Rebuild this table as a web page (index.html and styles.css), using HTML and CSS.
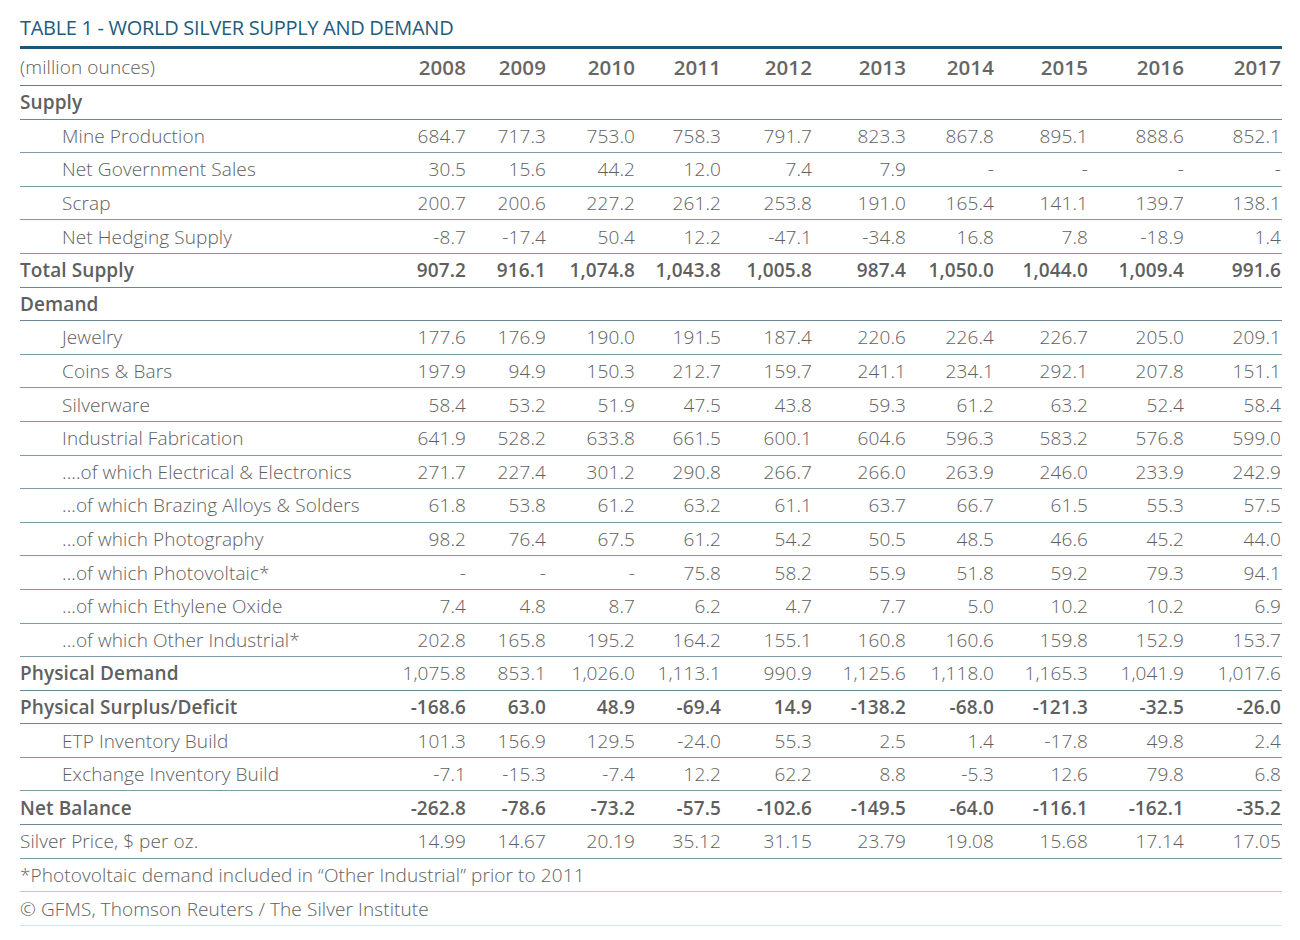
FILE: index.html
```html
<!DOCTYPE html>
<html>
<head>
<meta charset="utf-8">
<link rel="stylesheet" href="styles.css">
</head>
<body>
<div class="wrap">
  <h1 class="title">TABLE 1 - WORLD SILVER SUPPLY AND DEMAND</h1>
  <div class="table">
    <div class="row head"><div class="lbl reg">(million ounces)</div><div>2008</div><div>2009</div><div>2010</div><div>2011</div><div>2012</div><div>2013</div><div>2014</div><div>2015</div><div>2016</div><div>2017</div></div>
    <div class="row sect"><div class="lbl">Supply</div></div>
    <div class="row sub"><div class="lbl">Mine Production</div><div>684.7</div><div>717.3</div><div>753.0</div><div>758.3</div><div>791.7</div><div>823.3</div><div>867.8</div><div>895.1</div><div>888.6</div><div>852.1</div></div>
    <div class="row sub"><div class="lbl">Net Government Sales</div><div>30.5</div><div>15.6</div><div>44.2</div><div>12.0</div><div>7.4</div><div>7.9</div><div>-</div><div>-</div><div>-</div><div>-</div></div>
    <div class="row sub"><div class="lbl">Scrap</div><div>200.7</div><div>200.6</div><div>227.2</div><div>261.2</div><div>253.8</div><div>191.0</div><div>165.4</div><div>141.1</div><div>139.7</div><div>138.1</div></div>
    <div class="row sub"><div class="lbl">Net Hedging Supply</div><div>-8.7</div><div>-17.4</div><div>50.4</div><div>12.2</div><div>-47.1</div><div>-34.8</div><div>16.8</div><div>7.8</div><div>-18.9</div><div>1.4</div></div>
    <div class="row total"><div class="lbl">Total Supply</div><div>907.2</div><div>916.1</div><div>1,074.8</div><div>1,043.8</div><div>1,005.8</div><div>987.4</div><div>1,050.0</div><div>1,044.0</div><div>1,009.4</div><div>991.6</div></div>
    <div class="row sect"><div class="lbl">Demand</div></div>
    <div class="row sub"><div class="lbl">Jewelry</div><div>177.6</div><div>176.9</div><div>190.0</div><div>191.5</div><div>187.4</div><div>220.6</div><div>226.4</div><div>226.7</div><div>205.0</div><div>209.1</div></div>
    <div class="row sub"><div class="lbl">Coins &amp; Bars</div><div>197.9</div><div>94.9</div><div>150.3</div><div>212.7</div><div>159.7</div><div>241.1</div><div>234.1</div><div>292.1</div><div>207.8</div><div>151.1</div></div>
    <div class="row sub"><div class="lbl">Silverware</div><div>58.4</div><div>53.2</div><div>51.9</div><div>47.5</div><div>43.8</div><div>59.3</div><div>61.2</div><div>63.2</div><div>52.4</div><div>58.4</div></div>
    <div class="row sub"><div class="lbl">Industrial Fabrication</div><div>641.9</div><div>528.2</div><div>633.8</div><div>661.5</div><div>600.1</div><div>604.6</div><div>596.3</div><div>583.2</div><div>576.8</div><div>599.0</div></div>
    <div class="row sub"><div class="lbl">....of which Electrical &amp; Electronics</div><div>271.7</div><div>227.4</div><div>301.2</div><div>290.8</div><div>266.7</div><div>266.0</div><div>263.9</div><div>246.0</div><div>233.9</div><div>242.9</div></div>
    <div class="row sub"><div class="lbl">...of which Brazing Alloys &amp; Solders</div><div>61.8</div><div>53.8</div><div>61.2</div><div>63.2</div><div>61.1</div><div>63.7</div><div>66.7</div><div>61.5</div><div>55.3</div><div>57.5</div></div>
    <div class="row sub"><div class="lbl">...of which Photography</div><div>98.2</div><div>76.4</div><div>67.5</div><div>61.2</div><div>54.2</div><div>50.5</div><div>48.5</div><div>46.6</div><div>45.2</div><div>44.0</div></div>
    <div class="row sub"><div class="lbl">...of which Photovoltaic*</div><div>-</div><div>-</div><div>-</div><div>75.8</div><div>58.2</div><div>55.9</div><div>51.8</div><div>59.2</div><div>79.3</div><div>94.1</div></div>
    <div class="row sub"><div class="lbl">...of which Ethylene Oxide</div><div>7.4</div><div>4.8</div><div>8.7</div><div>6.2</div><div>4.7</div><div>7.7</div><div>5.0</div><div>10.2</div><div>10.2</div><div>6.9</div></div>
    <div class="row sub"><div class="lbl">...of which Other Industrial*</div><div>202.8</div><div>165.8</div><div>195.2</div><div>164.2</div><div>155.1</div><div>160.8</div><div>160.6</div><div>159.8</div><div>152.9</div><div>153.7</div></div>
    <div class="row boldlbl"><div class="lbl">Physical Demand</div><div>1,075.8</div><div>853.1</div><div>1,026.0</div><div>1,113.1</div><div>990.9</div><div>1,125.6</div><div>1,118.0</div><div>1,165.3</div><div>1,041.9</div><div>1,017.6</div></div>
    <div class="row total"><div class="lbl">Physical Surplus/Deficit</div><div>-168.6</div><div>63.0</div><div>48.9</div><div>-69.4</div><div>14.9</div><div>-138.2</div><div>-68.0</div><div>-121.3</div><div>-32.5</div><div>-26.0</div></div>
    <div class="row sub"><div class="lbl">ETP Inventory Build</div><div>101.3</div><div>156.9</div><div>129.5</div><div>-24.0</div><div>55.3</div><div>2.5</div><div>1.4</div><div>-17.8</div><div>49.8</div><div>2.4</div></div>
    <div class="row sub"><div class="lbl">Exchange Inventory Build</div><div>-7.1</div><div>-15.3</div><div>-7.4</div><div>12.2</div><div>62.2</div><div>8.8</div><div>-5.3</div><div>12.6</div><div>79.8</div><div>6.8</div></div>
    <div class="row total"><div class="lbl">Net Balance</div><div>-262.8</div><div>-78.6</div><div>-73.2</div><div>-57.5</div><div>-102.6</div><div>-149.5</div><div>-64.0</div><div>-116.1</div><div>-162.1</div><div>-35.2</div></div>
    <div class="row plain"><div class="lbl">Silver Price, $ per oz.</div><div>14.99</div><div>14.67</div><div>20.19</div><div>35.12</div><div>31.15</div><div>23.79</div><div>19.08</div><div>15.68</div><div>17.14</div><div>17.05</div></div>
    <div class="note n1">*Photovoltaic demand included in “Other Industrial” prior to 2011</div>
    <div class="note n2">© GFMS, Thomson Reuters / The Silver Institute</div>
  </div>
</div>
</body>
</html>
```
FILE: styles.css
```css
html, body {
  margin: 0;
  padding: 0;
  background: #ffffff;
}
.wrap {
  width: 1262px;
  margin-left: 20px;
  font-family: "Open Sans", "Liberation Sans", sans-serif;
  color: #606060;
}
.title {
  margin: 0;
  height: 46px;
  box-sizing: border-box;
  padding-top: 16px;
  font-size: 20px;
  font-weight: 400;
  line-height: 24px;
  color: #1d5c7d;
  letter-spacing: -0.3px;
}
.table {
  border-top: 3px solid #1d5878;
}
.row {
  display: grid;
  grid-template-columns: 360px 86px 80px 89px 86px 91px 94px 88px 94px 96px 97px;
  height: 33.6px;
  box-sizing: border-box;
  align-items: center;
  border-bottom: 1px solid #7d9ca7;
  font-size: 19px;
  font-weight: 300;
  letter-spacing: 0.1px;
}
.row > div {
  text-align: right;
  white-space: nowrap;
}
.row > .lbl {
  text-align: left;
}
.head {
  height: 37px;
  font-size: 20.5px;
  font-weight: 600;
  color: #666666;
  border-bottom-color: #5d7f8b;
}
.head .reg {
  font-size: 19px;
  font-weight: 300;
  color: #606060;
}
.sect, .total, .boldlbl {
  border-bottom-color: #678894;
}
.sect .lbl, .total, .boldlbl .lbl {
  font-weight: 600;
  color: #5f5f5f;
}
.sub .lbl {
  padding-left: 42px;
}
.note {
  height: 33.6px;
  box-sizing: border-box;
  display: flex;
  align-items: center;
  font-size: 19px;
  font-weight: 300;
  letter-spacing: 0.1px;
}
.n1 {
  border-bottom: 1px solid #b4cdd5;
}
.n2 {
  border-bottom: 1px solid #d3e4ea;
}
```
